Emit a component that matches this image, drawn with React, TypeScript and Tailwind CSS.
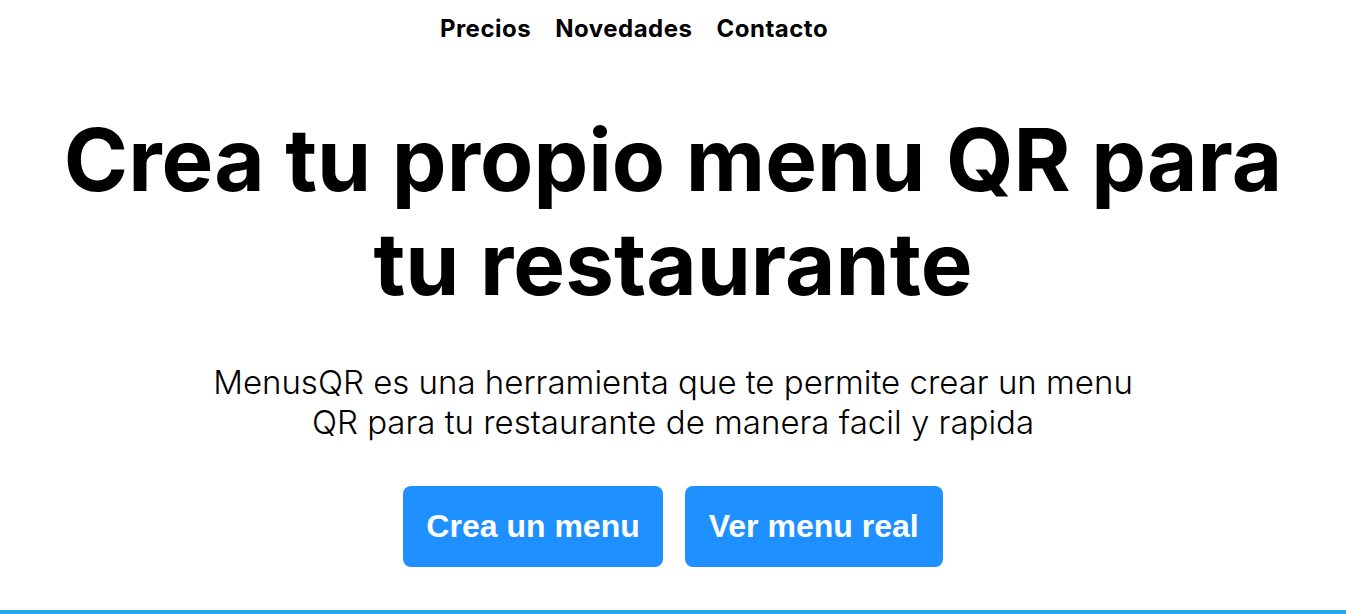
export default function App() {
  const links = ["Precios", "Novedades", "Contacto"];

  return (
    <div className="min-h-screen bg-white text-black font-['Inter',sans-serif]">
      <header className="h-14 flex items-center justify-center pr-[78px] pt-[2px]">
        <nav className="flex items-center gap-6">
          {links.map((l) => (
            <a key={l} href="#" className="text-[24px] font-bold tracking-[0.5px] text-black">
              {l}
            </a>
          ))}
        </nav>
      </header>

      <section className="flex flex-col items-center text-center pt-[52px]">
        <h1 className="text-[87px] leading-[1.2] font-bold max-w-[1250px]">
          Crea tu propio menu QR para tu restaurante
        </h1>
        <p className="mt-[45px] text-[33px] leading-[40px] font-light max-w-[960px]">
          MenusQR es una herramienta que te permite crear un menu QR para tu restaurante de manera facil y rapida
        </p>
        <div className="mt-[44px] flex gap-[22px] font-['Liberation_Sans',Arial,sans-serif]">
          <button className="h-[81px] px-[23px] rounded-lg bg-[#1e90ff] text-white text-[32px] font-bold">
            Crea un menu
          </button>
          <button className="h-[81px] px-[24px] rounded-lg bg-[#1e90ff] text-white text-[32px] font-bold">
            Ver menu real
          </button>
        </div>
      </section>

      <div className="mt-[43px] border-t-4 border-[#22a7f0]" />
    </div>
  );
}
